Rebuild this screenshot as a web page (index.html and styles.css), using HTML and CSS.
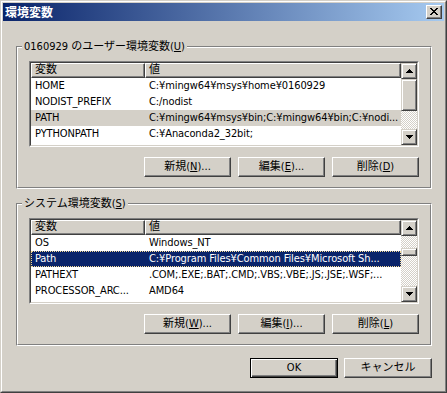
FILE: index.html
```html
<!DOCTYPE html>
<html lang="ja">
<head>
<meta charset="utf-8">
<title>環境変数</title>
<link rel="stylesheet" href="styles.css">
</head>
<body>
<div class="window">
  <div class="frame">
    <div class="titlebar">
      <span class="title">環境変数</span>
      <div class="close">
        <svg width="8" height="7" viewBox="0 0 8 7" shape-rendering="crispEdges"><path d="M0 0h2v1H0zM6 0h2v1H6zM1 1h2v1H1zM5 1h2v1H5zM2 2h4v1H2zM3 3h2v1H3zM2 4h4v1H2zM1 5h2v1H1zM5 5h2v1H5zM0 6h2v1H0zM6 6h2v1H6z" fill="#000"/></svg>
      </div>
    </div>
    <div class="content">
      <div class="group">
        <span class="legend">0160929 のユーザー環境変数(<u>U</u>)</span>
        <div class="group-inner">
          <div class="list">
            <div class="list-inner">
              <div class="table">
                <div class="header"><div class="hcell c1">変数</div><div class="hcell c2">値</div></div>
                <div class="row"><span class="c1">HOME</span><span class="c2">C:¥mingw64¥msys¥home¥0160929</span></div>
                <div class="row"><span class="c1">NODIST_PREFIX</span><span class="c2">C:/nodist</span></div>
                <div class="row inactive"><span class="c1">PATH</span><span class="c2">C:¥mingw64¥msys¥bin;C:¥mingw64¥bin;C:¥nodi...</span></div>
                <div class="row"><span class="c1">PYTHONPATH</span><span class="c2">C:¥Anaconda2_32bit;</span></div>
              </div>
              <div class="scrollbar">
                <div class="sb-btn"><svg width="7" height="4" viewBox="0 0 7 4" shape-rendering="crispEdges"><path d="M3 0h1v1H3zM2 1h3v1H2zM1 2h5v1H1zM0 3h7v1H0z" fill="#000"/></svg></div>
                <div class="sb-track"><div class="sb-thumb thumb-user"></div></div>
                <div class="sb-btn"><svg width="7" height="4" viewBox="0 0 7 4" shape-rendering="crispEdges"><path d="M0 0h7v1H0zM1 1h5v1H1zM2 2h3v1H2zM3 3h1v1H3z" fill="#000"/></svg></div>
              </div>
            </div>
          </div>
          <div class="buttons">
            <div class="btn">新規(<u>N</u>)...</div>
            <div class="btn">編集(<u>E</u>)...</div>
            <div class="btn">削除(<u>D</u>)</div>
          </div>
        </div>
      </div>

      <div class="group group-system">
        <span class="legend">システム環境変数(<u>S</u>)</span>
        <div class="group-inner">
          <div class="list">
            <div class="list-inner">
              <div class="table">
                <div class="header"><div class="hcell c1">変数</div><div class="hcell c2">値</div></div>
                <div class="row"><span class="c1">OS</span><span class="c2">Windows_NT</span></div>
                <div class="row selected"><span class="c1">Path</span><span class="c2">C:¥Program Files¥Common Files¥Microsoft Sh...</span></div>
                <div class="row"><span class="c1">PATHEXT</span><span class="c2">.COM;.EXE;.BAT;.CMD;.VBS;.VBE;.JS;.JSE;.WSF;...</span></div>
                <div class="row"><span class="c1">PROCESSOR_ARC...</span><span class="c2">AMD64</span></div>
              </div>
              <div class="scrollbar">
                <div class="sb-btn"><svg width="7" height="4" viewBox="0 0 7 4" shape-rendering="crispEdges"><path d="M3 0h1v1H3zM2 1h3v1H2zM1 2h5v1H1zM0 3h7v1H0z" fill="#000"/></svg></div>
                <div class="sb-track"><div class="sb-thumb thumb-system"></div></div>
                <div class="sb-btn"><svg width="7" height="4" viewBox="0 0 7 4" shape-rendering="crispEdges"><path d="M0 0h7v1H0zM1 1h5v1H1zM2 2h3v1H2zM3 3h1v1H3z" fill="#000"/></svg></div>
              </div>
            </div>
          </div>
          <div class="buttons">
            <div class="btn">新規(<u>W</u>)...</div>
            <div class="btn">編集(<u>I</u>)...</div>
            <div class="btn">削除(<u>L</u>)</div>
          </div>
        </div>
      </div>

      <div class="dialog-buttons">
        <div class="btn btn-default">OK</div>
        <div class="btn btn-wide">キャンセル</div>
      </div>
    </div>
  </div>
</div>
</body>
</html>
```
FILE: styles.css
```css
* { box-sizing: border-box; }
html, body { margin: 0; padding: 0; }
body {
  width: 447px;
  height: 393px;
  overflow: hidden;
  background: #d4d0c8;
  color: #000;
  font-family: "DejaVu Sans Condensed", "Noto Sans CJK JP", sans-serif;
  font-size: 11px;
}
u { text-decoration: underline; text-underline-offset: 1px; }

.window {
  width: 447px;
  height: 393px;
  border: 1px solid;
  border-color: #d4d0c8 #404040 #404040 #d4d0c8;
}
.frame {
  height: 100%;
  border: 1px solid;
  border-color: #fff #808080 #808080 #fff;
  padding: 1px;
  display: flex;
  flex-direction: column;
}
.titlebar {
  height: 18px;
  flex: none;
  background: linear-gradient(to right, #0a246a, #a6caf0);
  display: flex;
  align-items: center;
  justify-content: space-between;
  padding: 0 2px 0 2px;
}
.title {
  color: #fff;
  font-family: "Noto Sans CJK JP", sans-serif;
  font-weight: bold;
  font-size: 12px;
  line-height: 18px;
}
.close {
  width: 16px;
  height: 14px;
  background: #d4d0c8;
  border: 1px solid;
  border-color: #fff #404040 #404040 #fff;
  box-shadow: inset -1px -1px #808080;
  display: flex;
  align-items: center;
  justify-content: center;
  padding: 0 1px 1px 0;
}
.close svg { display: block; }

.content {
  padding: 25px 12px 0 13px;
}
.group {
  position: relative;
  border: 1px solid;
  border-color: #808080 #fff #fff #808080;
}
.group-system { margin-top: 14px; }
.group-inner {
  border: 1px solid;
  border-color: #fff #808080 #808080 #fff;
  padding: 13px 11px 10px 11px;
}
.legend {
  position: absolute;
  left: 5px;
  top: -7px;
  padding: 0 2px;
  background: #d4d0c8;
  line-height: 13px;
  white-space: nowrap;
}

.list {
  height: 86px;
  border: 1px solid;
  border-color: #808080 #fff #fff #808080;
}
.list-inner {
  height: 100%;
  border: 1px solid;
  border-color: #404040 #d4d0c8 #d4d0c8 #404040;
  background: #fff;
  display: flex;
}
.table { flex: 1; min-width: 0; }
.header { display: flex; height: 15px; }
.hcell {
  background: #d4d0c8;
  border: 1px solid;
  border-color: #fff #404040 #404040 #fff;
  box-shadow: inset -1px -1px #808080;
  padding-left: 3px;
  line-height: 12px;
  white-space: nowrap;
}
.c1 { width: 114px; flex: none; }
.c2 { flex: 1; min-width: 0; }
.row { display: flex; height: 16px; line-height: 16px; }
.row span {
  padding-left: 4px;
  white-space: nowrap;
  overflow: hidden;
  text-overflow: ellipsis;
  letter-spacing: -0.1px;
}
.row.inactive { background: #d4d0c8; }
.row.selected {
  background: #0a246a;
  color: #fff;
  outline: 1px dotted #f5db95;
  outline-offset: -1px;
}

.scrollbar {
  width: 16px;
  flex: none;
  display: flex;
  flex-direction: column;
}
.sb-btn, .sb-thumb {
  background: #d4d0c8;
  border: 1px solid;
  border-color: #d4d0c8 #404040 #404040 #d4d0c8;
  box-shadow: inset 1px 1px #fff, inset -1px -1px #808080;
}
.sb-btn {
  height: 16px;
  flex: none;
  display: flex;
  align-items: center;
  justify-content: center;
}
.sb-btn svg { display: block; }
.sb-track {
  flex: 1;
  display: flex;
  flex-direction: column;
  background-color: #d4d0c8;
  background-image: conic-gradient(#fff 25%, #d4d0c8 0 50%, #fff 0 75%, #d4d0c8 0);
  background-size: 2px 2px;
}
.thumb-user { height: 32px; }
.thumb-system { height: 8px; margin-top: 12px; }

.buttons {
  display: flex;
  justify-content: flex-end;
  gap: 7px;
  margin-top: 10px;
}
.btn {
  width: 87px;
  height: 20px;
  background: #d4d0c8;
  border: 1px solid;
  border-color: #fff #404040 #404040 #fff;
  box-shadow: inset -1px -1px #808080;
  display: flex;
  align-items: center;
  justify-content: center;
  line-height: 14px;
  white-space: nowrap;
}
.dialog-buttons {
  display: flex;
  justify-content: flex-end;
  gap: 6px;
  margin-top: 12px;
}
.dialog-buttons .btn { width: 88px; }
.btn-default {
  border-color: #000;
  box-shadow: inset 1px 1px #fff, inset -1px -1px #404040, inset -2px -2px #808080;
}
```
